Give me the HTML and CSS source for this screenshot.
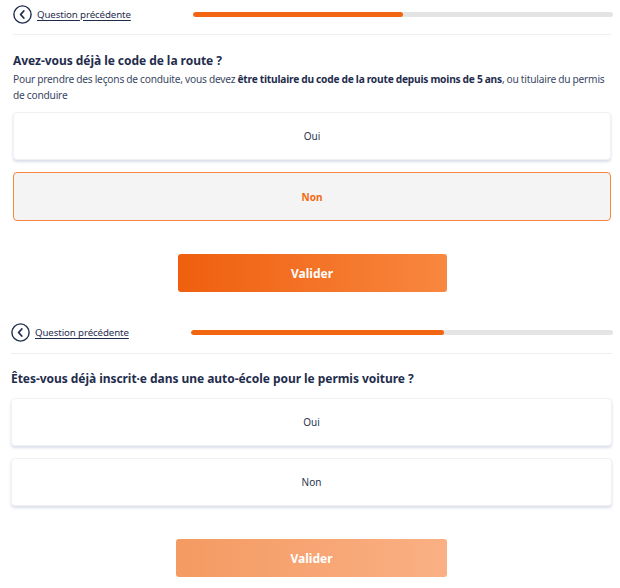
FILE: index.html
```html
<!DOCTYPE html>
<html lang="fr">
<head>
<meta charset="utf-8">
<title>Questions</title>
<link rel="stylesheet" href="styles.css">
</head>
<body>
<section class="screen screen-one">
  <div class="topbar">
    <a class="back" href="#">
      <svg class="back-icon" width="19" height="19" viewBox="0 0 19 19"><circle cx="9.5" cy="9.5" r="8.6" fill="none" stroke="#1f2d4d" stroke-width="1.4"/><path d="M10.8 6 L7.6 9.5 L10.8 13" fill="none" stroke="#1f2d4d" stroke-width="1.8" stroke-linecap="round" stroke-linejoin="round"/></svg>
      <span class="back-label">Question précédente</span>
    </a>
    <div class="progress"><div class="progress-fill" style="width:50%"></div></div>
  </div>
  <h2 class="title">Avez-vous déjà le code de la route ?</h2>
  <p class="desc">Pour prendre des leçons de conduite, vous devez <strong>être titulaire du code de la route depuis moins de 5 ans</strong>, ou titulaire du permis de conduire</p>
  <div class="choices">
    <button class="choice">Oui</button>
    <button class="choice selected">Non</button>
  </div>
  <div class="actions"><button class="validate">Valider</button></div>
</section>
<section class="screen screen-two">
  <div class="topbar">
    <a class="back" href="#">
      <svg class="back-icon" width="19" height="19" viewBox="0 0 19 19"><circle cx="9.5" cy="9.5" r="8.6" fill="none" stroke="#1f2d4d" stroke-width="1.4"/><path d="M10.8 6 L7.6 9.5 L10.8 13" fill="none" stroke="#1f2d4d" stroke-width="1.8" stroke-linecap="round" stroke-linejoin="round"/></svg>
      <span class="back-label">Question précédente</span>
    </a>
    <div class="progress"><div class="progress-fill" style="width:60%"></div></div>
  </div>
  <h2 class="title">Êtes-vous déjà inscrit·e dans une auto-école pour le permis voiture ?</h2>
  <div class="choices">
    <button class="choice">Oui</button>
    <button class="choice">Non</button>
  </div>
  <div class="actions"><button class="validate disabled">Valider</button></div>
</section>
</body>
</html>
```
FILE: styles.css
```css
* { box-sizing: border-box; }
html, body { margin: 0; padding: 0; background: #fff; }
body {
  width: 620px;
  font-family: "Noto Sans", "DejaVu Sans", sans-serif;
  color: #1f2d4d;
}
.screen { display: flex; flex-direction: column; }
.screen-one { padding: 5px 9px 0 13px; height: 318px; }
.screen-two { padding: 5px 8px 0 11px; }

.topbar {
  display: flex;
  align-items: center;
  height: 30px;
  padding-bottom: 11px;
  border-bottom: 1px solid #eceef2;
}
.screen-two .topbar { height: 31px; }
.back {
  display: flex;
  align-items: center;
  gap: 5px;
  text-decoration: none;
  color: #1f2d4d;
  width: 180px;
}
.back-label {
  font-size: 9.7px;
  text-decoration: underline;
  text-underline-offset: 2px;
  letter-spacing: -0.1px;
}
.progress {
  flex: 1;
  height: 5px;
  border-radius: 3px;
  background: #e4e4e4;
  overflow: hidden;
}
.screen-one .progress { margin-right: -2px; }
.screen-two .progress { margin-right: -1px; }
.progress-fill {
  height: 100%;
  background: #f26511;
  border-radius: 3px;
}

.title {
  font-size: 12px;
  font-weight: 700;
  margin: 17px 0 0;
  line-height: 18px;
  letter-spacing: -0.05px;
}
.screen-two .title { margin-top: 16px; }
.desc {
  font-size: 10.2px;
  line-height: 16px;
  margin: 1px -4px 0 0;
  color: #3a4763;
  letter-spacing: -0.2px;
  word-spacing: -0.3px;
}
.desc strong { color: #1f2d4d; }

.choices {
  display: flex;
  flex-direction: column;
  gap: 12px;
  margin-top: 9px;
}
.screen-two .choices { margin-top: 10px; }
.choice {
  height: 48px;
  border: 1px solid #f1f2f5;
  border-radius: 4px;
  background: #fff;
  box-shadow: 0 2px 3px rgba(120, 135, 175, 0.28);
  font-family: inherit;
  font-size: 10px;
  color: #2b3550;
  cursor: pointer;
}
.choice.selected {
  background: #f4f4f4;
  border: 1px solid #f5883d;
  color: #f26a10;
  font-weight: 700;
  box-shadow: none;
  height: 49px;
}

.actions {
  display: flex;
  justify-content: center;
  margin-top: 33px;
}
.validate {
  width: 269px;
  height: 38px;
  border: none;
  border-radius: 3px;
  background: linear-gradient(90deg, #ef5f0e 0%, #f8873f 100%);
  color: #fff;
  font-family: inherit;
  font-size: 12px;
  font-weight: 700;
  cursor: pointer;
}
.validate.disabled {
  width: 271px;
  background: linear-gradient(90deg, #f49a62 0%, #fab084 100%);
}
```
